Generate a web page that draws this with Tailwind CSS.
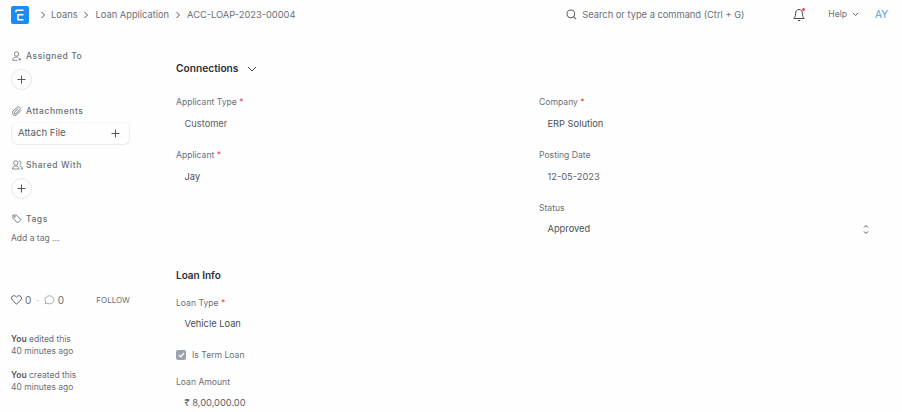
<!DOCTYPE html>
<html><head><meta charset="utf-8"><script src="https://cdn.jsdelivr.net/npm/@tailwindcss/browser@4"></script></head>
<body class="bg-[#fefefe] font-['Inter',sans-serif] text-[#5a6169] overflow-hidden">
<div class="w-[902px] h-[412px] overflow-hidden flex flex-col">
<header class="h-[29px] flex items-center pl-[11px] shrink-0">
  <div class="w-[18px] h-[18px] rounded-[2px] bg-[#1b8cf5] flex items-center justify-center">
    <svg width="10" height="12" viewBox="0 0 10 12" fill="none" stroke="#fff" stroke-width="1.6"><path d="M1 1.2H8.5M1 1.2V3.2M8.5 5.8H3V10.8H8.5"/></svg>
  </div>
  <div class="flex items-center text-[9.3px] text-[#687078] ml-[11px]">
    <svg width="6" height="8" viewBox="0 0 6 8" fill="none" stroke="#555" stroke-width="1"><path d="M1.5 1L4.5 4L1.5 7"/></svg>
    <span class="ml-[5px]">Loans</span>
    <svg class="ml-[5px]" width="6" height="8" viewBox="0 0 6 8" fill="none" stroke="#555" stroke-width="1"><path d="M1.5 1L4.5 4L1.5 7"/></svg>
    <span class="ml-[7px]">Loan Application</span>
    <svg class="ml-[6px]" width="6" height="8" viewBox="0 0 6 8" fill="none" stroke="#555" stroke-width="1"><path d="M1.5 1L4.5 4L1.5 7"/></svg>
    <span class="ml-[6px]">ACC-LOAP-2023-00004</span>
  </div>
  <div class="ml-auto flex items-center">
    <svg width="11" height="11" viewBox="0 0 12 12" fill="none" stroke="#555c63" stroke-width="1.1"><circle cx="5.3" cy="5.3" r="4.2"/><path d="M8.4 8.4L11 11"/></svg>
    <span class="ml-[5px] text-[9.3px] text-[#687178] whitespace-nowrap w-[171px]">Search or type a command (Ctrl + G)</span>
    <div class="relative w-[14px] h-[14px] ml-[39px]">
      <svg width="14" height="14" viewBox="0 0 14 14" fill="none" stroke="#444b52" stroke-width="1"><path d="M7 1.5C4.6 1.5 3.6 3.4 3.6 5.5C3.6 8 3 9.3 1.8 10.5H12.2C11 9.3 10.4 8 10.4 5.5C10.4 3.4 9.4 1.5 7 1.5Z"/><path d="M5.8 12.5H8.2"/></svg>
      <span class="absolute top-[0px] right-[1px] w-[3px] h-[3px] rounded-full bg-[#e24c4c]"></span>
    </div>
    <span class="ml-[22px] text-[8.6px] text-[#687178]">Help</span>
    <svg class="ml-[5px]" width="7" height="5" viewBox="0 0 7 5" fill="none" stroke="#687178" stroke-width="1"><path d="M1 1L3.5 3.5L6 1"/></svg>
    <span class="ml-[16px] mr-[14px] text-[10px] text-[#4c9eea]">AY</span>
  </div>
</header>
<div class="flex flex-1">
  <aside class="w-[119px] ml-[11px] shrink-0 text-[8.5px] text-[#687178]">
    <div class="flex items-center h-[12px] mt-[21px] tracking-[0.55px] font-medium">
      <svg class="mr-[4px] ml-[1px]" width="10" height="10" viewBox="0 0 10 10" fill="none" stroke="#687178" stroke-width=".8"><circle cx="4.5" cy="3" r="2.2"/><path d="M.7 9.3C.7 7 2.5 6 4.5 6C5.3 6 6 6.2 6.5 6.4M.7 9.3H5.5M7.8 7V9.6M6.5 8.3H9.1"/></svg>Assigned To</div>
    <div class="w-[21px] h-[21px] mt-[7px] rounded-full border border-[#e4e6e8] flex items-center justify-center">
      <svg width="9" height="9" viewBox="0 0 9 9" stroke="#50575e" stroke-width="1"><path d="M4.5 .5V8.5M.5 4.5H8.5"/></svg></div>
    <div class="flex items-center h-[12px] mt-[15px] tracking-[0.55px] font-medium">
      <svg class="mr-[4px] ml-[1px]" width="10" height="10" viewBox="0 0 10 10" fill="none" stroke="#687178" stroke-width=".9"><path d="M8.8 4.6L4.8 8.6C3.8 9.6 2 9.6 1 8.6C0 7.6 0 6 1 5L5.2 1.4C5.9.7 7 .7 7.7 1.4C8.4 2.1 8.4 3.2 7.7 3.9L3.8 7.5C3.4 7.9 2.8 7.9 2.4 7.5C2 7.1 2 6.5 2.4 6.1L6 2.8"/></svg>Attachments</div>
    <div class="h-[23px] mt-[5px] rounded-[6px] border border-[#ebedef] border-t-[#f4f5f6] flex items-center justify-between pl-[6px] pr-[9px] text-[#555c63] text-[9.6px]">
      <span>Attach File</span>
      <svg width="9" height="9" viewBox="0 0 9 9" stroke="#50575e" stroke-width="1"><path d="M4.5 .5V8.5M.5 4.5H8.5"/></svg></div>
    <div class="flex items-center h-[12px] mt-[14px] tracking-[0.55px] font-medium">
      <svg class="mr-[3px] ml-[1px]" width="11" height="10" viewBox="0 0 11 10" fill="none" stroke="#687178" stroke-width=".8"><circle cx="3.8" cy="3" r="2.2"/><path d="M.5 9C.5 7 2 6 3.8 6C5.6 6 7 7 7 9ZM6.8 1C8 .8 9 1.7 9 3C9 4 8.3 4.9 7.3 5M8 6.2C9.4 6.5 10.5 7.5 10.5 9H8.6"/></svg>Shared With</div>
    <div class="w-[21px] h-[21px] mt-[7px] rounded-full border border-[#e4e6e8] flex items-center justify-center">
      <svg width="9" height="9" viewBox="0 0 9 9" stroke="#50575e" stroke-width="1"><path d="M4.5 .5V8.5M.5 4.5H8.5"/></svg></div>
    <div class="flex items-center h-[12px] mt-[14px] tracking-[0.55px] font-medium">
      <svg class="mr-[4px] ml-[1px]" width="10" height="10" viewBox="0 0 10 10" fill="none" stroke="#687178" stroke-width=".9"><path d="M.8 1.2L1 4.2L5.6 9L9 5.6L4.2 1ZM2.8 2.2"/><circle cx="2.8" cy="2.9" r=".5"/></svg>Tags</div>
    <div class="mt-[7px] h-[12px] leading-[12px]">Add a tag ...</div>
    <div class="flex items-center h-[14px] mt-[49px]">
      <svg class="mr-[3px]" width="11" height="10" viewBox="0 0 11 10" fill="none" stroke="#444b52" stroke-width=".9"><path d="M5.5 9.2L1.3 5C.2 3.9.3 2.3 1.3 1.3C2.4.4 4.3.5 5.5 2.2C6.7.5 8.6.4 9.7 1.3C10.7 2.3 10.8 3.9 9.7 5Z"/></svg>
      <span class="text-[10px]">0</span><span class="mx-[5px] text-[#9aa1a8]">·</span>
      <svg class="mr-[3px]" width="11" height="10" viewBox="0 0 11 10" fill="none" stroke="#8d949b" stroke-width=".8"><path d="M5.5 .8C8 .8 10 2.6 10 4.8C10 7 8 8.8 5.5 8.8C4.5 8.8 3.5 8.6 2.8 8.1L1 9L1.6 7C1.2 6.4 1 5.6 1 4.8C1 2.6 3 .8 5.5 .8Z"/></svg>
      <span class="text-[10px]">0</span>
      <span class="ml-auto text-[8px] text-[#687078]">FOLLOW</span>
    </div>
    <div class="mt-[26px] leading-[12px]"><b class="font-semibold text-[#50575e]">You</b> edited this<br>40 minutes ago</div>
    <div class="mt-[12px] leading-[12px]"><b class="font-semibold text-[#50575e]">You</b> created this<br>40 minutes ago</div>
  </aside>
  <main class="ml-[46px] flex-1 text-[9.3px]">
    <div class="flex items-center h-[14px] mt-[33px] text-[10.2px] font-semibold text-[#2a3036]">Connections
      <svg class="ml-[9px]" width="10" height="6" viewBox="0 0 10 6" fill="none" stroke="#444b52" stroke-width="1"><path d="M1 1L5 5L9 1"/></svg></div>
    <div class="grid grid-cols-[363px_1fr] mt-[20px]">
      <div>
        <div class="h-[12px] leading-[12px] text-[8.6px] text-[#687178]">Applicant Type <span class="text-[#e24c4c]">*</span></div>
        <div class="h-[20px] leading-[20px] mt-[5.5px] pl-[8.5px] text-[#5a6169]">Customer</div>
        <div class="h-[12px] leading-[12px] text-[8.6px] text-[#687178] mt-[15.5px]">Applicant <span class="text-[#e24c4c]">*</span></div>
        <div class="h-[20px] leading-[20px] mt-[5.5px] pl-[8.5px] text-[#4a5057]">Jay</div>
      </div>
      <div class="w-[330px]">
        <div class="h-[12px] leading-[12px] text-[8.6px] text-[#687178]">Company <span class="text-[#e24c4c]">*</span></div>
        <div class="h-[20px] leading-[20px] mt-[5.5px] pl-[8.5px] text-[#4a5057]">ERP Solution</div>
        <div class="h-[12px] leading-[12px] text-[8.6px] text-[#687178] mt-[15.5px]">Posting Date</div>
        <div class="h-[20px] leading-[20px] mt-[5.5px] pl-[8.5px]">12-05-2023</div>
        <div class="h-[12px] leading-[12px] text-[8.6px] text-[#687178] mt-[15.5px]">Status</div>
        <div class="h-[20px] mt-[5px] pl-[8.5px] flex items-center justify-between text-[#4a5057]">Approved
          <svg width="6" height="11" viewBox="0 0 6 11" fill="none" stroke="#50575e" stroke-width="1"><path d="M1 3.5L3 1.5L5 3.5M1 7.5L3 9.5L5 7.5"/></svg></div>
      </div>
    </div>
    <div class="h-[14px] leading-[14px] mt-[29px] text-[10px] font-semibold text-[#2a3036]">Loan Info</div>
    <div class="h-[12px] leading-[12px] text-[8.6px] text-[#687178] mt-[15px]">Loan Type <span class="text-[#e24c4c]">*</span></div>
    <div class="h-[20px] leading-[20px] mt-[5px] pl-[8.5px] text-[#4a5057]">Vehicle Loan</div>
    <div class="flex items-center h-[12px] mt-[15px] text-[8.6px] text-[#687178]">
      <span class="w-[10px] h-[10px] rounded-[2px] bg-[#9aa3ad] flex items-center justify-center mr-[6px]"><svg width="7" height="6" viewBox="0 0 7 6" fill="none" stroke="#fff" stroke-width="1.2"><path d="M1 3L2.8 4.8L6 1"/></svg></span>Is Term Loan</div>
    <div class="h-[12px] leading-[12px] text-[8.6px] text-[#687178] mt-[15px]">Loan Amount</div>
    <div class="h-[20px] leading-[20px] mt-[5px] pl-[8.5px]">₹ 8,00,000.00</div>
  </main>
</div>
</div>
</body></html>
